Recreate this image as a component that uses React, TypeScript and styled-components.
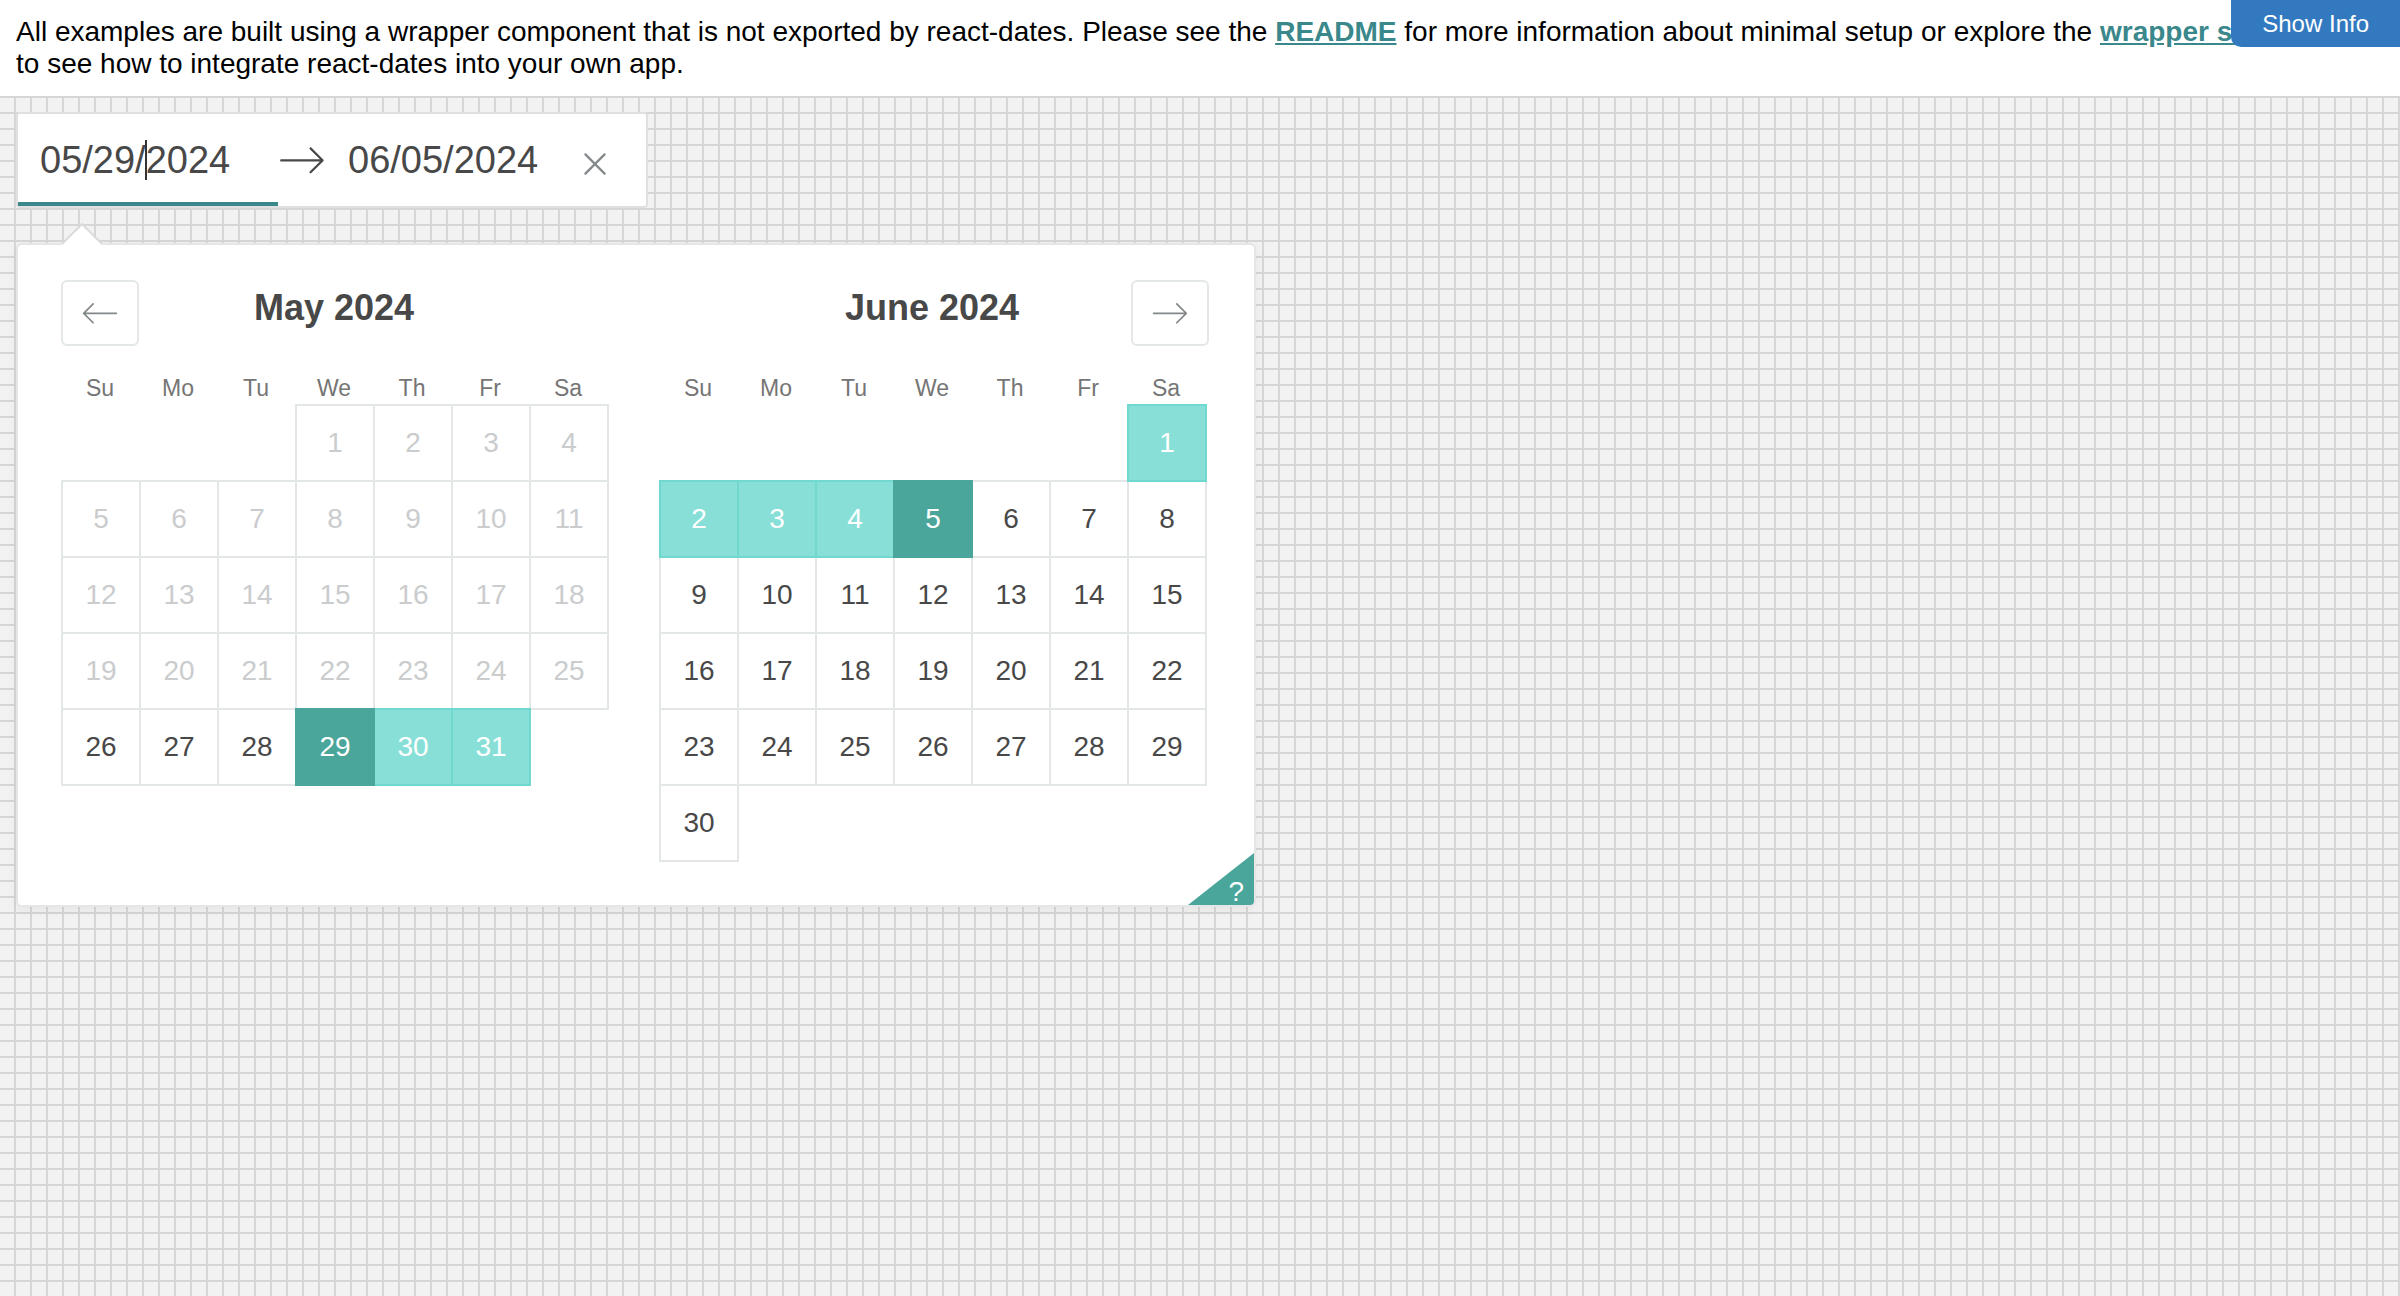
import React from "react";
import styled, { createGlobalStyle, css } from "styled-components";

type DayState = "blocked" | "default" | "span" | "selected";

interface MonthData {
  title: string;
  offset: number;
  length: number;
  nav: "prev" | "next";
  stateOf: (day: number) => DayState;
}

const WEEKDAYS = ["Su", "Mo", "Tu", "We", "Th", "Fr", "Sa"];

const MONTHS: MonthData[] = [
  {
    title: "May 2024",
    offset: 3,
    length: 31,
    nav: "prev",
    stateOf: (d) => (d <= 25 ? "blocked" : d === 29 ? "selected" : d >= 30 ? "span" : "default"),
  },
  {
    title: "June 2024",
    offset: 6,
    length: 30,
    nav: "next",
    stateOf: (d) => (d <= 4 ? "span" : d === 5 ? "selected" : "default"),
  },
];

const GlobalStyle = createGlobalStyle`
  html, body {
    margin: 0;
    padding: 0;
    background: #fff;
  }
  body {
    font-family: "Liberation Sans", Arial, Helvetica, sans-serif;
  }
`;

const ArrowRightIcon = ({ size }: { size: number }) => (
  <svg width={size} height={size} viewBox="0 0 1000 1000" fill="#484848">
    <path d="M694 242l249 250c12 11 12 21 1 32L694 773c-5 5-10 7-16 7s-11-2-16-7c-11-11-11-21 0-32l210-210H68c-13 0-23-10-23-23s10-23 23-23h806L662 275c-21-22 11-54 32-33z" />
  </svg>
);

const NavArrow = ({ dir }: { dir: "prev" | "next" }) => (
  <svg width={38} height={38} viewBox="0 0 1000 1000" fill="#82888a">
    {dir === "prev" ? (
      <path d="M336 275L126 485h806c13 0 23 10 23 23s-10 23-23 23H126l210 210c11 11 11 21 0 32-5 5-10 7-16 7s-11-2-16-7L55 524c-11-11-11-21 0-32l249-249c21-22 53 10 32 32z" />
    ) : (
      <path d="M694 242l249 250c12 11 12 21 1 32L694 773c-5 5-10 7-16 7s-11-2-16-7c-11-11-11-21 0-32l210-210H68c-13 0-23-10-23-23s10-23 23-23h806L662 275c-21-22 11-54 32-33z" />
    )}
  </svg>
);

const CloseIcon = () => (
  <svg width={30} height={24} viewBox="0 0 12 12" fill="none" stroke="#82888a" strokeWidth={1.1} strokeLinecap="round">
    <path d="M1.2 1.2L10.8 10.8M10.8 1.2L1.2 10.8" />
  </svg>
);

export default function App() {
  return (
    <Page>
      <GlobalStyle />
      <Intro>
        All examples are built using a wrapper component that is not exported by react-dates. Please see the{" "}
        <DocLink href="#">README</DocLink> for more information about minimal setup or explore the{" "}
        <DocLink href="#">wrapper source</DocLink>
        <br />
        to see how to integrate react-dates into your own app.
      </Intro>
      <ShowInfoButton>Show Info</ShowInfoButton>

      <Canvas>
        <RangeInput>
          <DateField $focused>
            05/29/
            <TextCaret />
            2024
          </DateField>
          <RangeArrow>
            <ArrowRightIcon size={48} />
          </RangeArrow>
          <DateField>06/05/2024</DateField>
          <ClearButton aria-label="Clear Dates">
            <CloseIcon />
          </ClearButton>
        </RangeInput>

        <Picker>
          <Fang width={40} height={22} viewBox="0 0 40 22">
            <polygon points="0,22 20,2 40,22" fill="#fff" />
            <polyline points="0,21 20,1 40,21" fill="none" stroke="#dbdbdb" strokeWidth={2} />
          </Fang>

          {MONTHS.map((month) => (
            <Month key={month.title}>
              <MonthHeader>
                <NavButton $side={month.nav} aria-label={month.nav === "prev" ? "Previous month" : "Next month"}>
                  <NavArrow dir={month.nav} />
                </NavButton>
                <Caption>{month.title}</Caption>
              </MonthHeader>
              <WeekHeader>
                {WEEKDAYS.map((w) => (
                  <WeekDay key={w}>{w}</WeekDay>
                ))}
              </WeekHeader>
              <DaysGrid>
                {Array.from({ length: month.offset }).map((_, i) => (
                  <Blank key={`b${i}`} />
                ))}
                {Array.from({ length: month.length }).map((_, i) => (
                  <Day key={i} $state={month.stateOf(i + 1)}>
                    {i + 1}
                  </Day>
                ))}
              </DaysGrid>
            </Month>
          ))}

          <HelpCorner>
            <HelpMark>?</HelpMark>
          </HelpCorner>
        </Picker>
      </Canvas>
    </Page>
  );
}

const Page = styled.div`
  position: relative;
  min-height: 100vh;
  display: flex;
  flex-direction: column;
`;

const Intro = styled.p`
  margin: 0;
  padding: 16px;
  font-size: 28px;
  line-height: 32px;
  color: #000;
  white-space: nowrap;
  overflow: hidden;
`;

const DocLink = styled.a`
  color: #3a888b;
  font-weight: bold;
  text-decoration: underline;
`;

const ShowInfoButton = styled.button`
  position: absolute;
  top: 0;
  right: 0;
  height: 47px;
  padding: 0 31px;
  border: 0;
  border-radius: 0 0 0 10px;
  background: #3279bf;
  color: #fff;
  font-family: "Liberation Sans", Arial, sans-serif;
  font-size: 24px;
`;

const Canvas = styled.main`
  flex: 1;
  display: flex;
  flex-direction: column;
  align-items: flex-start;
  padding: 16px;
  background-color: #f2f2f2;
  background-image: linear-gradient(to right, transparent 14px, #d6d6d6 14px, #d6d6d6 16px),
    linear-gradient(to bottom, #d6d6d6 2px, transparent 2px);
  background-size: 16px 16px;
`;

const RangeInput = styled.div`
  position: relative;
  display: inline-flex;
  align-items: center;
  padding-right: 60px;
  background: #fff;
  border: 2px solid #e0e0e0;
  border-radius: 4px;
`;

const DateField = styled.div<{ $focused?: boolean }>`
  box-sizing: border-box;
  width: 260px;
  padding: 22px 22px 18px;
  font-size: 38px;
  line-height: 48px;
  color: #484848;
  white-space: nowrap;
  border-bottom: 4px solid ${({ $focused }) => ($focused ? "#3a888b" : "transparent")};
`;

const TextCaret = styled.span`
  display: inline-block;
  width: 2px;
  height: 40px;
  margin: 0 -1px;
  background: #333;
  vertical-align: -7px;
`;

const RangeArrow = styled.div`
  display: flex;
  width: 48px;
  height: 48px;
`;

const ClearButton = styled.button`
  position: absolute;
  right: 0;
  top: 50%;
  transform: translateY(-50%);
  margin: 4px 16px 0 10px;
  padding: 20px;
  border: 0;
  background: none;
  line-height: 0;
`;

const Picker = styled.div`
  position: relative;
  box-sizing: border-box;
  width: 1240px;
  margin-top: 35px;
  display: flex;
  align-items: flex-start;
  padding: 0 23px 45px 17px;
  background: #fff;
  border: 2px solid #e6e6e6;
  border-radius: 6px;
  box-shadow: 0 4px 12px rgba(0, 0, 0, 0.05);
`;

const Fang = styled.svg`
  position: absolute;
  top: -22px;
  left: 44px;
`;

const Month = styled.section`
  box-sizing: border-box;
  width: 598px;
  padding: 0 26px;
`;

const MonthHeader = styled.div`
  display: grid;
  grid-template-columns: 78px 1fr 78px;
  padding-top: 35px;
`;

const NavButton = styled.button<{ $side: "prev" | "next" }>`
  grid-row: 1;
  grid-column: ${({ $side }) => ($side === "prev" ? 1 : 3)};
  justify-self: ${({ $side }) => ($side === "prev" ? "start" : "end")};
  margin-right: ${({ $side }) => ($side === "next" ? "-4px" : "0")};
  box-sizing: border-box;
  width: 78px;
  height: 66px;
  display: flex;
  align-items: center;
  justify-content: center;
  padding: 0;
  background: #fff;
  border: 2px solid #e4e7e7;
  border-radius: 6px;
`;

const Caption = styled.h2`
  grid-row: 1;
  grid-column: 2;
  margin: 7px 0 0;
  font-size: 36px;
  line-height: 42px;
  font-weight: bold;
  color: #484848;
  text-align: center;
`;

const WeekHeader = styled.div`
  display: grid;
  grid-template-columns: repeat(7, 78px);
  margin-top: 26px;
  height: 32px;
`;

const WeekDay = styled.small`
  font-size: 23px;
  line-height: 32px;
  color: #757575;
  text-align: center;
`;

const DaysGrid = styled.div`
  display: grid;
  grid-template-columns: repeat(7, 78px);
  grid-auto-rows: 76px;
`;

const Blank = styled.div``;

const dayStates = {
  default: css`
    background: #fff;
    border: 2px solid #e4e7e7;
    color: #484848;
  `,
  blocked: css`
    background: #fff;
    border: 2px solid #e4e7e7;
    color: #cacccd;
  `,
  span: css`
    position: relative;
    z-index: 1;
    background: #87dfd7;
    border: 2px solid #70d8cf;
    color: #fff;
  `,
  selected: css`
    position: relative;
    z-index: 2;
    background: #4aa59a;
    border: 2px solid #4aa59a;
    color: #fff;
  `,
};

const Day = styled.div<{ $state: DayState }>`
  display: flex;
  align-items: center;
  justify-content: center;
  margin: 0 -2px -2px 0;
  font-size: 28px;
  ${({ $state }) => dayStates[$state]}
`;

const HelpCorner = styled.div`
  position: absolute;
  right: 0;
  bottom: 0;
  width: 66px;
  height: 52px;
  display: flex;
  align-items: flex-end;
  justify-content: flex-end;
  padding-right: 10px;
  box-sizing: border-box;
  background: #4aa59a;
  border-bottom-right-radius: 4px;
  clip-path: polygon(100% 0, 100% 100%, 0 100%);
`;

const HelpMark = styled.span`
  margin-bottom: -3px;
  font-size: 28px;
  line-height: 32px;
  color: #fff;
`;
